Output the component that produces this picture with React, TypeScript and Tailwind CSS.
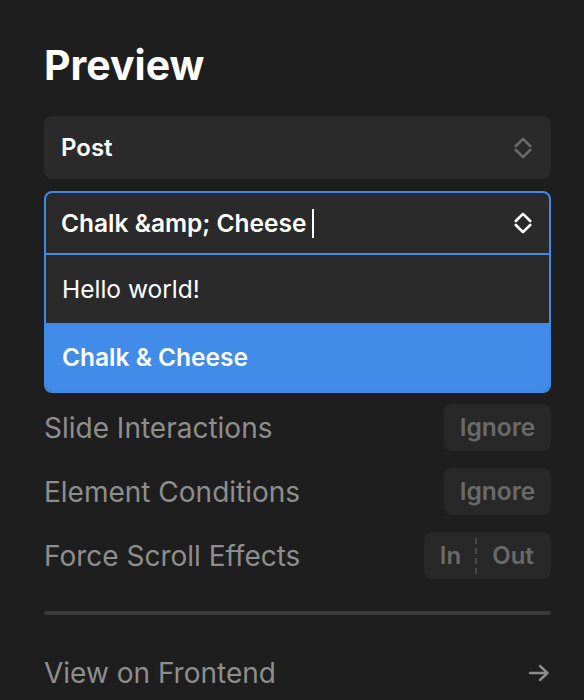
import React from "react";

function UpDown({ color }: { color: string }) {
  return (
    <svg width="18" height="24" viewBox="0 0 18 24" fill="none">
      <path d="M1.8 10 L9 2.8 L16.2 10" stroke={color} strokeWidth="2.6" strokeLinecap="round" strokeLinejoin="round" />
      <path d="M1.8 14 L9 21.2 L16.2 14" stroke={color} strokeWidth="2.6" strokeLinecap="round" strokeLinejoin="round" />
    </svg>
  );
}

function Row({ label, children }: { label: string; children: React.ReactNode }) {
  return (
    <div className="flex h-[47px] items-center justify-between">
      <span className="text-[28px] text-[#8e8e8e]">{label}</span>
      {children}
    </div>
  );
}

function Ignore() {
  return (
    <div className="flex h-[47px] w-[107px] items-center justify-center rounded-[8px] bg-[#282828] text-[24.5px] font-semibold text-[#6a6a6a]">
      Ignore
    </div>
  );
}

export default function App() {
  return (
    <div
      className="min-h-[700px] w-[584px] bg-[#1e1e1e] pl-[44px] pr-[33px] pt-[45px]"
      style={{ fontFamily: "Inter, 'Noto Sans', sans-serif" }}
    >
      <h1 className="text-[41px] font-bold leading-none text-white">Preview</h1>

      <div className="mt-[30px] flex h-[63px] items-center justify-between rounded-[8px] bg-[#2a2a2a] pl-[17px] pr-[19px]">
        <span className="text-[24px] font-semibold text-white">Post</span>
        <UpDown color="#6a6a6a" />
      </div>

      <div className="mt-[12px] overflow-hidden rounded-[8px] border-2 border-[#3d8be8] bg-[#2a2a2a]">
        <div className="flex h-[62px] items-center justify-between border-b-2 border-[#3d8be8] pl-[15px] pr-[17px]">
          <span className="flex items-center text-[24.5px] font-semibold text-white">
            Chalk &amp;amp; Cheese
            <span className="ml-[5px] inline-block h-[29px] w-[2px] bg-white" />
          </span>
          <UpDown color="#ffffff" />
        </div>
        <div className="flex h-[68px] items-center pl-[16px] text-[24.5px] text-white">Hello world!</div>
        <div className="flex h-[68px] items-center bg-[#418ce9] pl-[16px] text-[24.5px] font-semibold text-white">
          Chalk &amp; Cheese
        </div>
      </div>

      <div className="mt-[11px] flex flex-col gap-[17px]">
        <Row label="Slide Interactions">
          <Ignore />
        </Row>
        <Row label="Element Conditions">
          <Ignore />
        </Row>
        <Row label="Force Scroll Effects">
          <div className="flex h-[47px] w-[127px] items-center rounded-[8px] bg-[#282828] text-[24px] font-semibold text-[#6a6a6a]">
            <span className="flex flex-1 justify-center pl-[2px]">In</span>
            <span className="h-[36px] w-0 border-l-2 border-dashed border-[#4a4a4a]" />
            <span className="flex w-[74px] justify-center pr-[2px]">Out</span>
          </div>
        </Row>
      </div>

      <div className="mt-[32px] h-[4px] rounded-full bg-[#3a3a3a]" />

      <div className="mt-[37px] flex items-center justify-between">
        <span className="text-[28px] text-[#8e8e8e]">View on Frontend</span>
        <svg width="22" height="18" viewBox="0 0 22 18" fill="none" className="mr-[1px]">
          <path d="M2 9 H19" stroke="#8e8e8e" strokeWidth="2.4" strokeLinecap="round" />
          <path d="M12 2 L19.5 9 L12 16" stroke="#8e8e8e" strokeWidth="2.4" strokeLinecap="round" strokeLinejoin="round" />
        </svg>
      </div>
    </div>
  );
}
